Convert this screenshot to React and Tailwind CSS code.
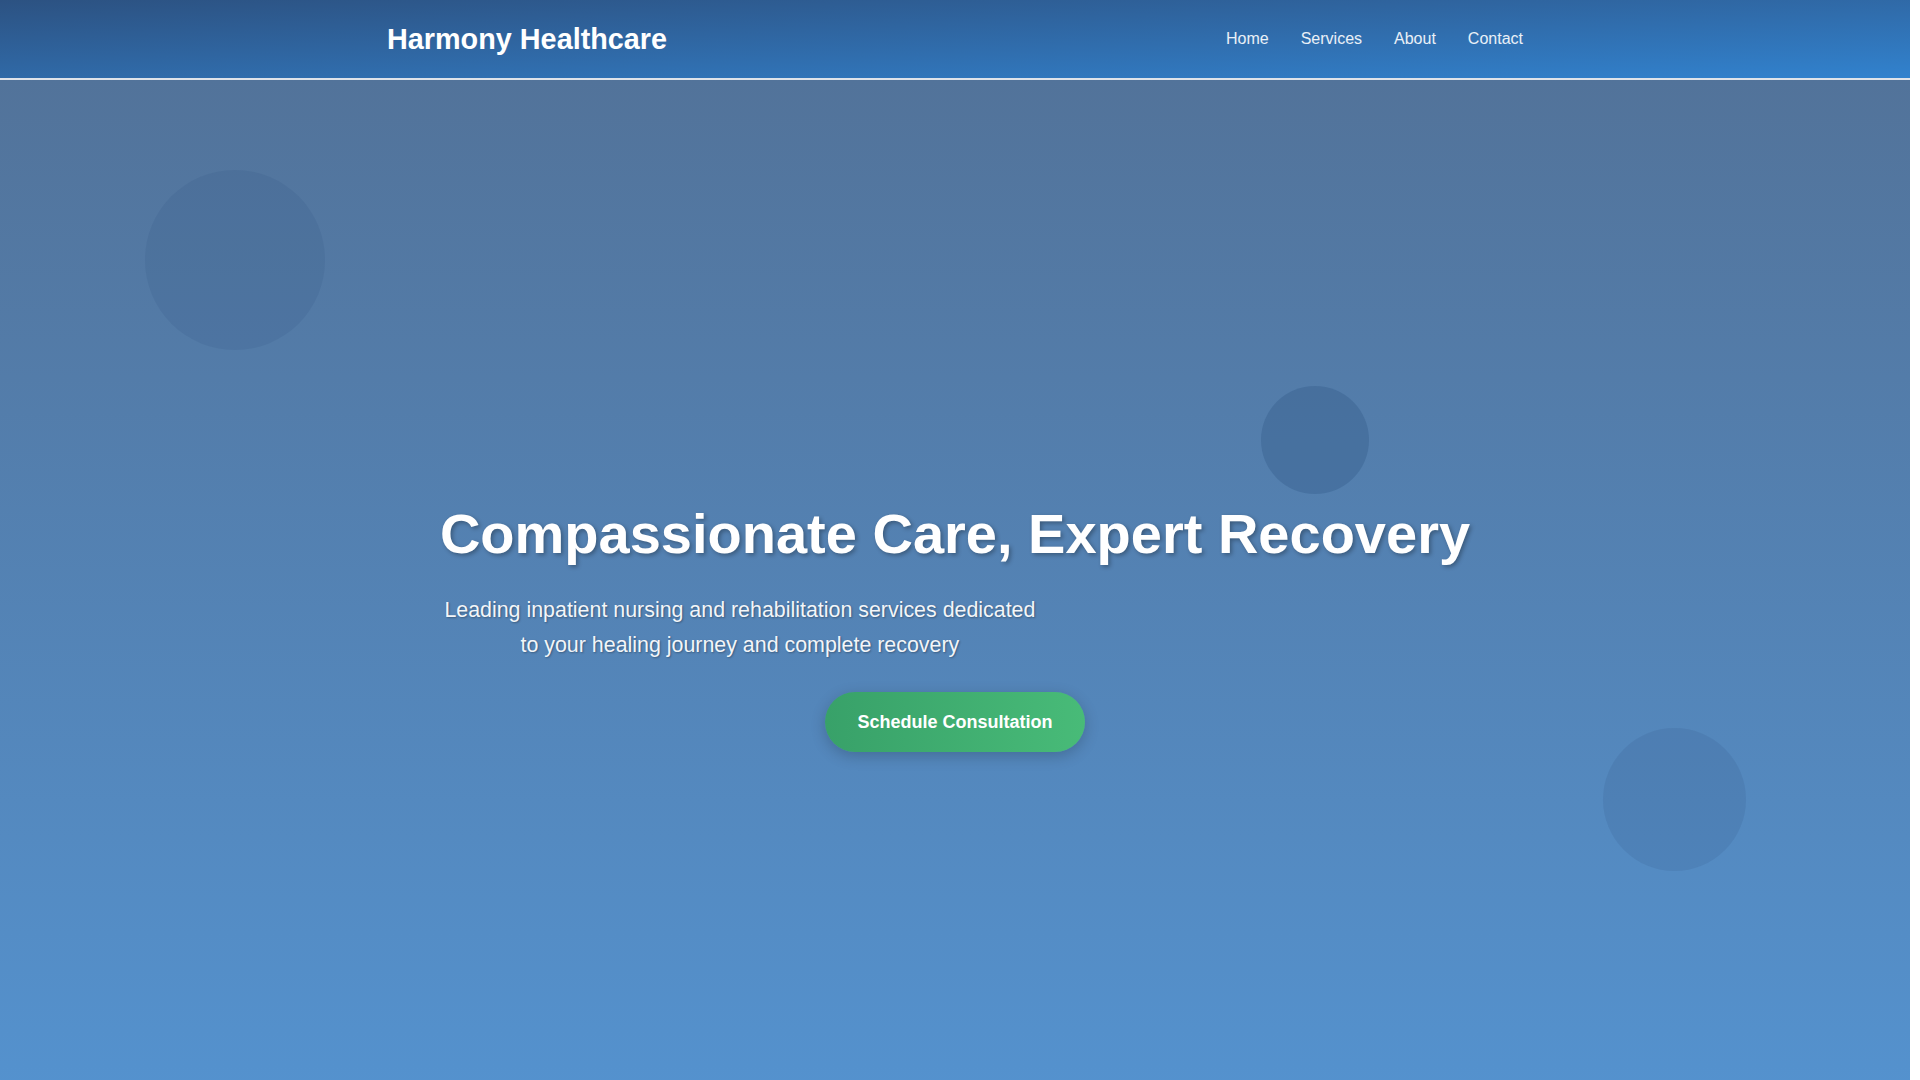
import React from 'react';

const navLinks = ['Home', 'Services', 'About', 'Contact'];

const services = [
  { title: 'Skilled Nursing', text: 'Round-the-clock nursing care delivered by licensed professionals.' },
  { title: 'Physical Therapy', text: 'Personalized programs to restore strength, mobility and balance.' },
  { title: 'Occupational Therapy', text: 'Helping patients regain independence in daily activities.' },
  { title: 'Speech Therapy', text: 'Support for communication, cognition and swallowing.' },
  { title: 'Post-Surgical Care', text: 'Attentive recovery care after orthopedic and cardiac surgery.' },
  { title: 'Respite Care', text: 'Short-term stays that give families time to rest.' },
];

// page is laid out at 1910px: the reference was taken with a 10px scrollbar on the right
const Header = () => (
  <header className="fixed top-0 left-0 z-20 w-[1910px] h-[80px] border-b-2 border-[#dfe3e9] bg-gradient-to-br from-[#2c5282] to-[#3182ce]">
    <div className="max-w-[1200px] h-full mx-auto px-8 flex items-center justify-between">
      <div className="text-[28.8px] font-bold text-white leading-none">Harmony Healthcare</div>
      <nav className="flex gap-8">
        {navLinks.map((link) => (
          <a key={link} href={`#${link.toLowerCase()}`} className="text-base text-white/90 hover:text-white">
            {link}
          </a>
        ))}
      </nav>
    </div>
  </header>
);

const Hero = () => (
  <section
    id="home"
    className="relative mt-[80px] h-[1080px] overflow-hidden pt-[12px] flex items-center justify-center bg-gradient-to-b from-[#52739a] to-[#5494d2]"
  >
    {/* floating decorative circles */}
    <div className="absolute left-[145px] top-[90px] w-[180px] h-[180px] rounded-full bg-[#2c5282]/15"></div>
    <div className="absolute left-[1261px] top-[306px] w-[108px] h-[108px] rounded-full bg-[#2c5282]/30"></div>
    <div className="absolute left-[1603px] top-[648px] w-[143px] h-[143px] rounded-full bg-[#2c5282]/15"></div>

    <div className="relative w-fit mx-auto text-center">
      <h1 className="text-[56px] font-bold leading-[1.2] text-white mb-[26px] [text-shadow:2px_2px_4px_rgba(0,0,0,0.3)]">
        Compassionate Care, Expert Recovery
      </h1>
      <p className="max-w-[600px] text-[21.4px] leading-[34.5px] text-white/95 mb-[30px] [text-shadow:1px_1px_2px_rgba(0,0,0,0.3)]">
        Leading inpatient nursing and rehabilitation services dedicated to your healing journey and complete recovery
      </p>
      <button className="px-8 py-4 rounded-full text-[18px] font-bold leading-[28px] text-white bg-gradient-to-r from-[#38a169] to-[#48bb78] shadow-[0_4px_15px_rgba(0,0,0,0.2)]">
        Schedule Consultation
      </button>
    </div>
  </section>
);

const Services = () => (
  <section id="services" className="bg-[#f7fafc] py-24 min-h-[1100px]">
    <div className="max-w-[1200px] mx-auto px-8">
      <h2 className="text-center text-[40px] font-bold text-[#2c5282] mb-4">Our Services</h2>
      <p className="text-center text-lg text-gray-600 mb-16">Comprehensive care tailored to every stage of recovery</p>
      <div className="grid grid-cols-3 gap-8">
        {services.map((s) => (
          <div key={s.title} className="bg-white rounded-xl p-8 shadow-md">
            <div className="w-14 h-14 rounded-full bg-gradient-to-br from-[#2c5282] to-[#3182ce] mb-6"></div>
            <h3 className="text-xl font-bold text-[#2d3748] mb-3">{s.title}</h3>
            <p className="text-gray-600 leading-relaxed">{s.text}</p>
          </div>
        ))}
      </div>
    </div>
  </section>
);

const About = () => (
  <section id="about" className="bg-white py-24 min-h-[1000px]">
    <div className="max-w-[1200px] mx-auto px-8 grid grid-cols-2 gap-16 items-center">
      <div>
        <h2 className="text-[40px] font-bold text-[#2c5282] mb-6">About Harmony</h2>
        <p className="text-lg text-gray-600 leading-relaxed mb-4">
          For over two decades our team has helped patients and families through every step of recovery.
        </p>
        <p className="text-lg text-gray-600 leading-relaxed">
          We combine clinical expertise with genuine compassion in a calm, healing environment.
        </p>
      </div>
      <div className="h-[420px] rounded-2xl bg-gradient-to-br from-[#2c5282] to-[#48bb78]"></div>
    </div>
  </section>
);

const Contact = () => (
  <section id="contact" className="bg-[#f7fafc] py-24 min-h-[800px]">
    <div className="max-w-[700px] mx-auto px-8 text-center">
      <h2 className="text-[40px] font-bold text-[#2c5282] mb-6">Contact Us</h2>
      <p className="text-lg text-gray-600 mb-10">Call us or send a message and our admissions team will reach out.</p>
      <div className="flex flex-col gap-4 text-left">
        <input className="border border-gray-300 rounded-lg px-4 py-3 bg-white" placeholder="Your name" />
        <input className="border border-gray-300 rounded-lg px-4 py-3 bg-white" placeholder="Email address" />
        <textarea className="border border-gray-300 rounded-lg px-4 py-3 bg-white h-32" placeholder="Message"></textarea>
      </div>
    </div>
  </section>
);

const Footer = () => (
  <footer className="bg-[#2d3748] text-white/80 py-12 text-center">
    © Harmony Healthcare. All rights reserved.
  </footer>
);

export default function App() {
  return (
    <div className="w-[1910px] font-['Liberation_Sans',Arial,sans-serif]">
      <Header />
      <Hero />
      <Services />
      <About />
      <Contact />
      <Footer />
    </div>
  );
}
